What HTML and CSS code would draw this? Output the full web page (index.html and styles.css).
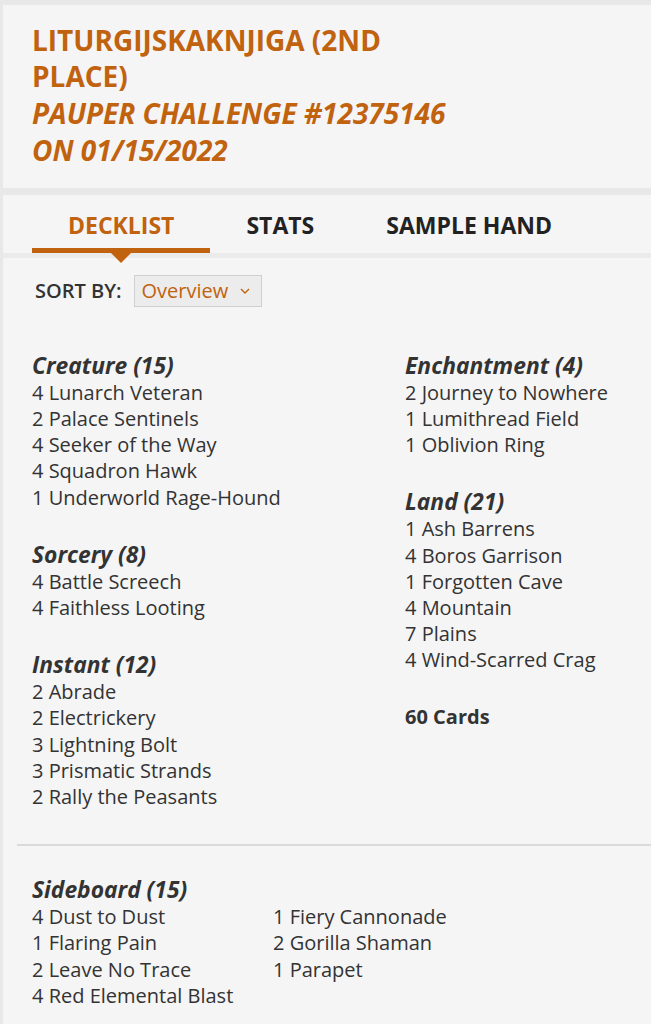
FILE: index.html
```html
<!DOCTYPE html>
<html>
<head>
<meta charset="utf-8">
<link rel="stylesheet" href="styles.css">
</head>
<body>
<div class="page">
  <header class="head">
    <h1 class="title">Liturgijskaknjiga (2nd Place) <em class="event">Pauper Challenge #12375146 on 01/15/2022</em></h1>
  </header>
  <nav class="tabs">
    <a class="tab active">Decklist</a>
    <a class="tab">Stats</a>
    <a class="tab">Sample Hand</a>
  </nav>
  <main class="content">
    <div class="sort">
      <span class="sort-label">Sort by:</span>
      <span class="select">Overview <svg class="chev" viewBox="0 0 10 6" width="10" height="6"><path d="M1 1l4 4 4-4" fill="none" stroke="#c0620e" stroke-width="1.4"/></svg></span>
    </div>
    <div class="deck">
      <div class="col">
        <section class="group">
          <h3 class="gh">Creature (15)</h3>
          <div>4 Lunarch Veteran</div>
          <div>2 Palace Sentinels</div>
          <div>4 Seeker of the Way</div>
          <div>4 Squadron Hawk</div>
          <div>1 Underworld Rage-Hound</div>
        </section>
        <section class="group">
          <h3 class="gh">Sorcery (8)</h3>
          <div>4 Battle Screech</div>
          <div>4 Faithless Looting</div>
        </section>
        <section class="group">
          <h3 class="gh">Instant (12)</h3>
          <div>2 Abrade</div>
          <div>2 Electrickery</div>
          <div>3 Lightning Bolt</div>
          <div>3 Prismatic Strands</div>
          <div>2 Rally the Peasants</div>
        </section>
      </div>
      <div class="col">
        <section class="group">
          <h3 class="gh">Enchantment (4)</h3>
          <div>2 Journey to Nowhere</div>
          <div>1 Lumithread Field</div>
          <div>1 Oblivion Ring</div>
        </section>
        <section class="group">
          <h3 class="gh">Land (21)</h3>
          <div>1 Ash Barrens</div>
          <div>4 Boros Garrison</div>
          <div>1 Forgotten Cave</div>
          <div>4 Mountain</div>
          <div>7 Plains</div>
          <div>4 Wind-Scarred Crag</div>
        </section>
        <div class="total">60 Cards</div>
      </div>
    </div>
    <hr class="divider">
    <section class="side">
      <h3 class="gh">Sideboard (15)</h3>
      <div class="side-grid">
        <div>4 Dust to Dust</div>
        <div>1 Fiery Cannonade</div>
        <div>1 Flaring Pain</div>
        <div>2 Gorilla Shaman</div>
        <div>2 Leave No Trace</div>
        <div>1 Parapet</div>
        <div>4 Red Elemental Blast</div>
      </div>
    </section>
  </main>
</div>
</body>
</html>
```

FILE: styles.css
```css
html, body {
  margin: 0;
  padding: 0;
}
body {
  background: #e8e8e8;
  font-family: "Open Sans", "Liberation Sans", sans-serif;
  color: #333;
  overflow: hidden;
}
.page {
  padding: 5px 0 0 3px;
  display: flex;
  flex-direction: column;
  gap: 7px;
}
.head {
  background: #f5f5f5;
  padding: 16.5px 20px 19.5px 29px;
}
.title {
  margin: 0;
  width: 440px;
  font-size: 28px;
  line-height: 36.7px;
  font-weight: 700;
  text-transform: uppercase;
  color: #c0620e;
}
.event {
  display: block;
  font-style: italic;
}
.tabs {
  background: #f5f5f5;
  display: flex;
  padding: 0 0 0 29px;
  height: 58px;
  margin-bottom: -7px;
}
.tab {
  position: relative;
  display: flex;
  align-items: center;
  padding: 7px 36px 0;
  height: 58px;
  font-size: 23px;
  font-weight: 700;
  text-transform: uppercase;
  color: #222;
  box-sizing: border-box;
  border-bottom: 5px solid transparent;
}
.tab.active {
  color: #c0620e;
  border-bottom-color: #c0620e;
}
.tab.active::after {
  content: "";
  position: absolute;
  left: 50%;
  bottom: -15px;
  margin-left: -10px;
  border-left: 10px solid transparent;
  border-right: 10px solid transparent;
  border-top: 10px solid #c0620e;
}
.content {
  background: #f5f5f5;
  padding: 17px 0 40px 29px;
  border-top: 5px solid #ebebeb;
}
.sort {
  display: flex;
  align-items: center;
  gap: 12px;
  padding-left: 3px;
}
.sort-label {
  font-size: 20px;
  font-weight: 600;
  text-transform: uppercase;
  color: #333;
}
.select {
  display: flex;
  align-items: center;
  gap: 12px;
  height: 32px;
  box-sizing: border-box;
  padding: 0 11px 0 7px;
  background: #ececec;
  border: 1px solid #cfcfcf;
  font-size: 20px;
  color: #c0620e;
}
.chev {
  margin-top: 1px;
}
.deck {
  display: grid;
  grid-template-columns: 373px 1fr;
  margin-top: 45px;
}
.group {
  font-size: 20px;
  line-height: 26.2px;
  margin-bottom: 30px;
}
.gh {
  margin: 0;
  font-size: 22.8px;
  line-height: 28px;
  font-weight: 700;
  font-style: italic;
  color: #333;
}
.total {
  font-size: 20px;
  font-weight: 700;
  line-height: 26px;
}
.divider {
  border: 0;
  border-top: 2px solid #dadada;
  margin: 4px 0 0 -15px;
}
.side {
  margin-top: 30px;
  font-size: 20px;
  line-height: 26.2px;
}
.side-grid {
  display: grid;
  grid-template-columns: 241px 1fr;
}
```
